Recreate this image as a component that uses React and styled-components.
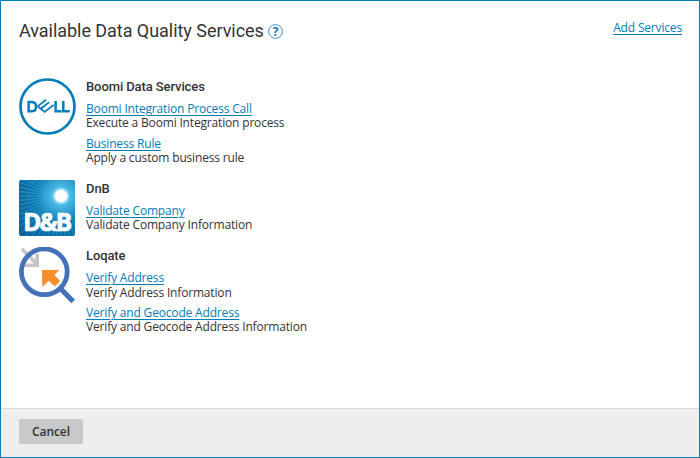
import React from "react";
import styled, { createGlobalStyle } from "styled-components";

const GlobalStyle = createGlobalStyle`
  *, *::before, *::after { box-sizing: border-box; }
  body { margin: 0; background: #fff; }
`;

const Dialog = styled.div`
  display: flex;
  flex-direction: column;
  width: 700px;
  height: 458px;
  border: 1px solid #007db8;
  background: #fff;
  color: #333;
  font: 12px/14px "Open Sans", sans-serif;
  letter-spacing: -0.17px;
`;

const Header = styled.header`
  display: flex;
  justify-content: space-between;
  align-items: flex-start;
  height: 77px;
  padding: 18px 17px 0 18px;
`;

const TitleGroup = styled.div`
  display: flex;
  align-items: center;
  gap: 4px;
`;

const Title = styled.h1`
  margin: 0;
  font: 400 18px/24px Roboto, sans-serif;
  letter-spacing: -0.04px;
`;

const HelpIcon = styled.svg`
  display: block;
  width: 15px;
  height: 15px;
`;

const Link = styled.a`
  color: #007db8;
  text-decoration: underline;
  text-decoration-thickness: 1px;
  text-underline-offset: 2px;
  white-space: nowrap;
`;

const HeaderLink = styled(Link)`
  line-height: 18px;
`;

const Services = styled.main`
  flex: 1;
  padding-left: 18px;
`;

const Provider = styled.section`
  display: flex;
  gap: 10px;
  min-height: ${(p) => p.$height}px;
`;

const Logo = styled.svg`
  display: block;
  flex: none;
  width: 57px;
  height: 57px;
`;

const ProviderName = styled.h2`
  margin: 0 0 7px;
  font: 500 13px/17px Roboto, sans-serif;
  letter-spacing: -0.1px;
`;

const Service = styled.div`
  display: flex;
  flex-direction: column;
  align-items: flex-start;
  gap: ${(p) => p.$gap || 0}px;
  height: 35px;
`;

const Footer = styled.footer`
  display: flex;
  align-items: flex-start;
  height: 49px;
  padding: 10px 18px;
  border-top: 1px solid #dcdcdc;
  background: #eee;
`;

const CancelButton = styled.button`
  width: 64px;
  height: 25px;
  padding: 0;
  border: 0;
  border-radius: 2px;
  background: #c8c9cb;
  color: #333;
  font: 600 12px/25px "Open Sans", sans-serif;
  letter-spacing: -0.1px;
`;

function DellLogo() {
  return (
    <Logo viewBox="0 0 57 57">
      <circle cx="28.5" cy="28.5" r="27" fill="none" stroke="#007db8" strokeWidth="2.7" />
      <g fill="none" stroke="#007db8" strokeWidth="2.5">
        <path d="M9.6 24.1h2.6c3.2 0 4.9 1.9 4.9 4.6s-1.7 4.6-4.9 4.6H9.6z" />
        <path d="M36.6 22.9v10.4h5.9M44.3 22.9v10.4h6.4" />
      </g>
      <g fill="none" stroke="#007db8" strokeWidth="1.8">
        <path d="M18.6 28.4l8.5-6.6M21.6 30.8l8.7-6.7M18.6 28.2l7 5.7 9-6.9" />
      </g>
    </Logo>
  );
}

const rays = Array.from({ length: 60 }, (_, i) => {
  const a = (i * Math.PI) / 30;
  return `M42 16L${42 + 70 * Math.cos(a)} ${16 + 70 * Math.sin(a)}`;
}).join("");

function DnbLogo() {
  return (
    <Logo viewBox="0 0 57 57">
      <defs>
        <radialGradient id="sky" gradientUnits="userSpaceOnUse" cx="42" cy="16" r="58">
          <stop offset="0" stopColor="#a5e6fa" />
          <stop offset=".17" stopColor="#3fb0df" />
          <stop offset=".42" stopColor="#0f7fb9" />
          <stop offset="1" stopColor="#065b96" />
        </radialGradient>
        <radialGradient id="sun">
          <stop offset="0" stopColor="#fff" />
          <stop offset=".58" stopColor="#fff" />
          <stop offset="1" stopColor="#bdf0ff" stopOpacity="0" />
        </radialGradient>
        <clipPath id="tile"><rect width="56" height="56" rx="2" /></clipPath>
      </defs>
      <g clipPath="url(#tile)">
        <rect width="56" height="56" fill="url(#sky)" />
        <path d={rays} stroke="#6ccbe9" strokeWidth=".6" opacity=".5" />
        <circle cx="42" cy="16" r="9" fill="url(#sun)" />
        <text x="4.3" y="51" fill="#fff" stroke="#fff" strokeWidth=".7" fontFamily="Open Sans, sans-serif" fontSize="25" fontWeight="700" letterSpacing="-2" textLength="47" lengthAdjust="spacingAndGlyphs">D&amp;B</text>
      </g>
    </Logo>
  );
}

function LoqateLogo() {
  return (
    <Logo viewBox="0 0 57 57">
      <path d="M3 2l14 14M3.5 18.2h14.7V7" fill="none" stroke="#c3c5c7" strokeWidth="3.6" />
      <circle cx="25.3" cy="24.8" r="22.9" fill="none" stroke="#4472b8" strokeWidth="4.8" />
      <path d="M41 41L54.2 54.5" fill="none" stroke="#4472b8" strokeWidth="5.2" />
      <path d="M23 23h17.2l-4.8 5 5.8 6-5.5 5.6-6-5.9-6.4 6.2z" fill="#f78e2b" />
    </Logo>
  );
}

const providers = [
  {
    name: "Boomi Data Services",
    logo: DellLogo,
    height: 102,
    services: [
      ["Boomi Integration Process Call", "Execute a Boomi Integration process"],
      ["Business Rule", "Apply a custom business rule"],
    ],
  },
  {
    name: "DnB",
    logo: DnbLogo,
    height: 67,
    services: [["Validate Company", "Validate Company Information"]],
  },
  {
    name: "Loqate",
    logo: LoqateLogo,
    height: 102,
    services: [
      ["Verify Address", "Verify Address Information", 1],
      ["Verify and Geocode Address", "Verify and Geocode Address Information"],
    ],
  },
];

export default function App() {
  return (
    <>
      <GlobalStyle />
      <Dialog>
        <Header>
          <TitleGroup>
            <Title>Available Data Quality Services</Title>
            <HelpIcon viewBox="0 0 15 15">
              <circle cx="7.5" cy="7.5" r="6.9" fill="#fff" stroke="#3d8fc4" strokeWidth="1" />
              <text x="7.5" y="11.7" textAnchor="middle" fill="#1f6fb0" fontFamily="Open Sans, sans-serif" fontSize="12" fontWeight="700">?</text>
            </HelpIcon>
          </TitleGroup>
          <HeaderLink>Add Services</HeaderLink>
        </Header>
        <Services>
          {providers.map(({ name, logo: Mark, height, services }) => (
            <Provider key={name} $height={height}>
              <Mark />
              <div>
                <ProviderName>{name}</ProviderName>
                {services.map(([label, description, gap]) => (
                  <Service key={label} $gap={gap}>
                    <Link>{label}</Link>
                    <span>{description}</span>
                  </Service>
                ))}
              </div>
            </Provider>
          ))}
        </Services>
        <Footer>
          <CancelButton>Cancel</CancelButton>
        </Footer>
      </Dialog>
    </>
  );
}
